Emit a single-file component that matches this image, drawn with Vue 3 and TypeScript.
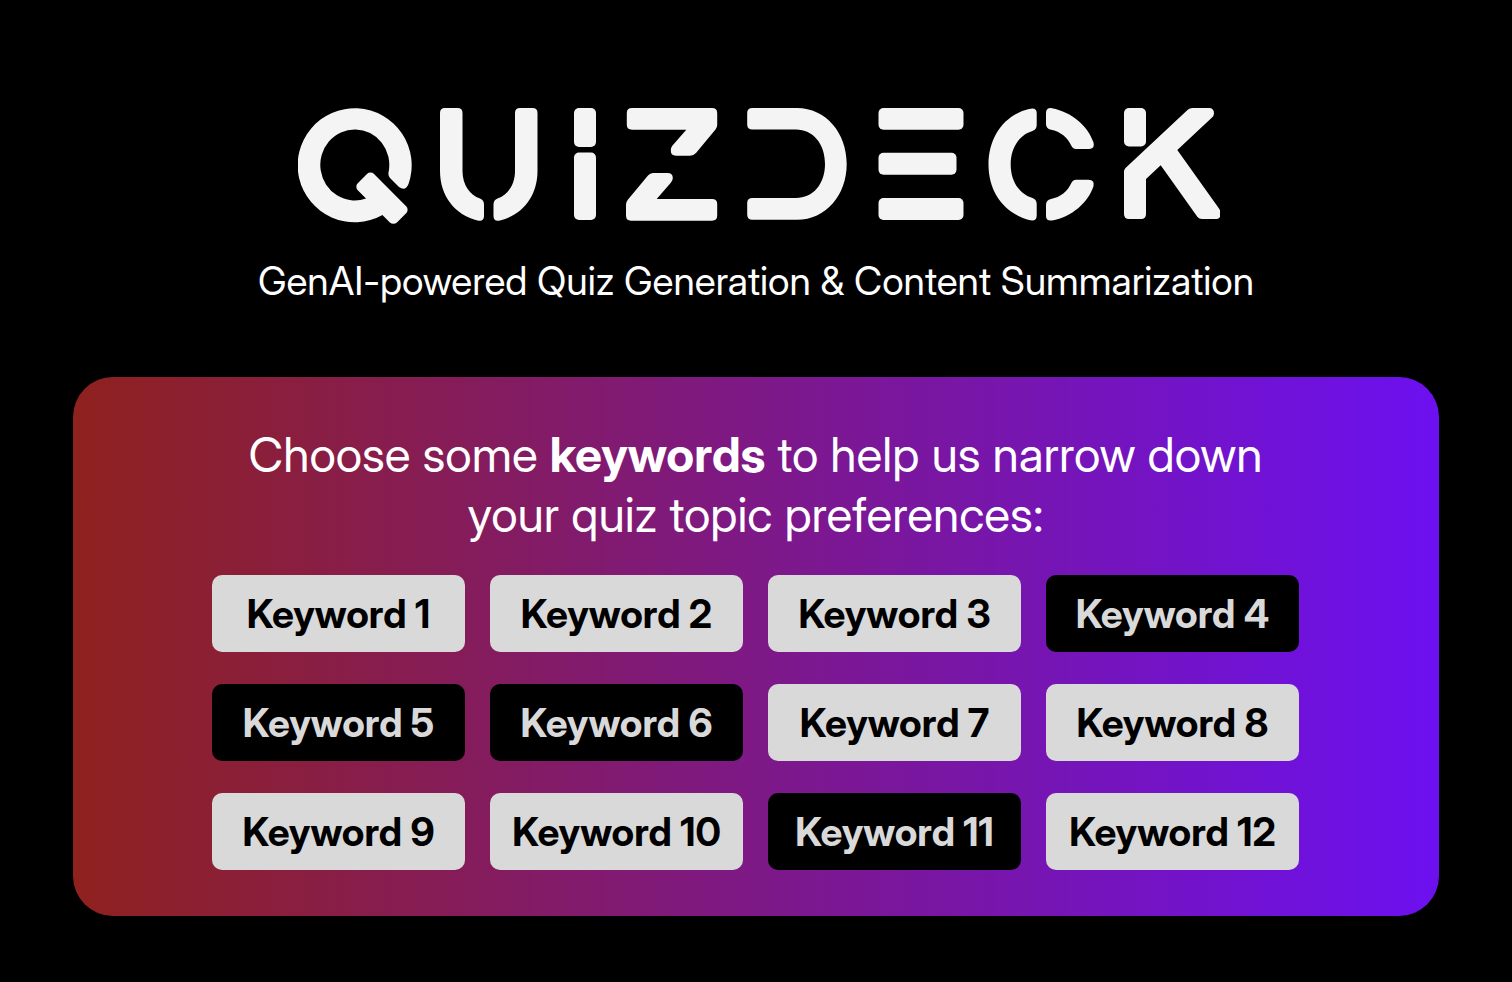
<script setup lang="ts">
import { ref } from 'vue'

interface Keyword {
  id: number
  label: string
  selected: boolean
}

const preselected = [4, 5, 6, 11]

const keywords = ref<Keyword[]>(
  Array.from({ length: 12 }, (_, i) => ({
    id: i + 1,
    label: `Keyword ${i + 1}`,
    selected: preselected.includes(i + 1),
  })),
)

function toggle(keyword: Keyword): void {
  keyword.selected = !keyword.selected
}
</script>

<template>
  <div class="page">
    <header class="header">
      <h1 class="brand">
        <svg class="logo" viewBox="298 108 922 116" role="img" aria-label="QuizDeck">
          <g fill="#f4f4f4">
            <path d="M388.6 172Q387.8 175.500 390 178L399 187Q405.500 191.500 408.500 184A57 57 0 1 0 382.500 215L384 206L372 195L366 198.500A34.500 35.500 0 1 1 388.600 172Z" />
            <rect x="370.5" y="170.5" width="55.4" height="23" rx="5" transform="rotate(45 370.5 170.5)" />

            <path id="curve" d="M440 113Q440 108 445 108H457.500Q462.500 108 462.500 113V171C462.500 185 470 195 480 198.500Q484 200 484 204.500V216Q484 222 477.500 220.500C455 215 440 196 440 171Z" />
            <use href="#curve" transform="translate(977.5 0) scale(-1 1)" />

            <rect x="574" y="108" width="22" height="39" rx="5" />
            <rect x="574" y="152.500" width="22" height="67.500" rx="5" />

            <path d="M632 108H712Q717.200 108 717.200 113V125Q717.200 127.500 715.500 129.500L696 153Q693.500 155.700 690 155.700H676Q670.800 155.700 670.800 150.500Q670.800 147.500 672.500 145.500L686.300 129.700H632Q626.800 129.700 626.800 124.500V113Q626.800 108 632 108Z" />
            <path d="M712 199H656.700L671 182.500Q672.800 180.500 672.800 178Q672.800 173 667.500 173H653Q650 173 648 175.500L628 199.500Q626 202 626 204.500V215.500Q626 220.700 631 220.700H712Q717.200 220.700 717.200 215.500V204Q717.200 199 712 199Z" />

            <path d="M752.500 108H797C826 108 846.700 133 846.700 164C846.700 195 826 219.800 797 219.800H752.500Q747.200 219.800 747.200 214.500V203Q747.200 198 752.500 198H796C813 198 825 184 825 164C825 144 813 129.600 796 129.600H752.500Q747.200 129.600 747.200 124.500V113Q747.200 108 752.500 108Z" />

            <rect x="878.5" y="108" width="85" height="21.700" rx="5" />
            <rect x="878.5" y="152.700" width="78" height="22" rx="5" />
            <rect x="878.5" y="198" width="85" height="22" rx="5" />

            <path d="M1029 109Q1036.700 107 1036.700 113V125Q1036.700 129.500 1032.500 131C1019 135 1010.700 148 1010.700 164.500C1010.700 181 1019 194 1032.500 198Q1036.700 199.500 1036.700 204V215.500Q1036.700 222 1029 220C1004 213 988.500 192 988.500 164.500C988.500 137 1004 115 1029 109Z" />
            <path id="quarter" d="M1046 113Q1046 107.500 1052 108.200C1072 112 1088 126 1093.500 142.500Q1095 149 1088.500 149H1076Q1073 149 1071.500 146C1067.500 137.500 1060.500 131.500 1051 129.800Q1046 128.500 1046 124Z" />
            <use href="#quarter" transform="translate(0 328.7) scale(1 -1)" />

            <rect x="1124" y="108" width="22" height="38.500" rx="5" />
            <path d="M1125.500 168L1187.500 110Q1189.500 108 1192.500 108H1209Q1214 108 1214 113.500Q1214 115.500 1212 117.500L1177.300 150L1219 208.500Q1223 215 1218.500 218.500Q1217 219 1214 219H1202Q1199 219 1197.500 217L1160.700 165.300L1146 179V214Q1146 219 1141 219H1129Q1124 219 1124 214V171.500Q1124 169.500 1125.500 168Z" />
          </g>
        </svg>
      </h1>
      <p class="tagline">GenAI-powered Quiz Generation &amp; Content Summarization</p>
    </header>

    <main class="card">
      <h2 id="prompt" class="prompt">
        Choose some <strong>keywords</strong> to help us narrow down your quiz topic preferences:
      </h2>
      <div class="keywords" role="group" aria-labelledby="prompt">
        <button
          v-for="keyword in keywords"
          :key="keyword.id"
          type="button"
          class="keyword"
          :class="{ selected: keyword.selected }"
          :aria-pressed="keyword.selected"
          @click="toggle(keyword)"
        >
          {{ keyword.label }}
        </button>
      </div>
    </main>
  </div>
</template>

<style>
body {
  margin: 0;
  background: #000;
}
</style>

<style scoped>
.page {
  box-sizing: border-box;
  min-height: 100vh;
  padding: 108px 73px 66px;
  background: #000;
  color: #fff;
  font-family: "Inter Display", Inter, "Liberation Sans", sans-serif;
}

.header {
  display: flex;
  flex-direction: column;
  align-items: center;
  gap: 33px;
  margin-bottom: 72px;
}

.brand {
  display: flex;
  justify-content: center;
  width: 100%;
  margin: 0;
  padding-left: 6px;
  box-sizing: border-box;
}

.logo {
  display: block;
  width: 100%;
  max-width: 922px;
}

.tagline {
  margin: 0;
  font-size: 39px;
  line-height: 48px;
  text-align: center;
}

.card {
  display: flex;
  flex-direction: column;
  align-items: center;
  gap: 30px;
  padding: 48px 140px 46px 139px;
  border-radius: 40px;
  background: linear-gradient(to right, #8f211e, #6c10f0);
}

.prompt {
  max-width: 1060px;
  margin: 0;
  font-size: 48px;
  font-weight: 400;
  line-height: 60px;
  text-align: center;
}

.prompt strong {
  font-weight: 700;
}

.keywords {
  display: grid;
  grid-template-columns: repeat(4, 1fr);
  gap: 32px 25px;
  width: 100%;
  max-width: 1087px;
}

.keyword {
  padding: 14px 0;
  border: 0;
  border-radius: 10px;
  background: #d9d9d9;
  color: #000;
  font-family: inherit;
  font-size: 39px;
  font-weight: 700;
  line-height: 49px;
  text-align: center;
  white-space: nowrap;
  cursor: pointer;
}

.keyword.selected {
  background: #000;
  color: #d9d9d9;
}

.keyword:focus-visible {
  outline: 3px solid #fff;
  outline-offset: 3px;
}
</style>
